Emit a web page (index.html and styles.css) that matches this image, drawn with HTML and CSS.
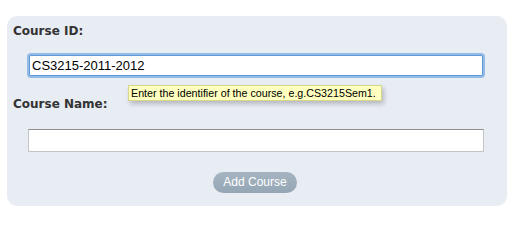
FILE: index.html
```html
<!DOCTYPE html>
<html>
<head>
<meta charset="utf-8">
<link rel="stylesheet" href="styles.css">
</head>
<body>
<div class="page">
  <form class="panel">
    <div class="label">Course ID:</div>
    <div class="field-wrap">
      <input class="field focused" type="text" value="CS3215-2011-2012">
      <div class="tooltip">Enter the identifier of the course, e.g.CS3215Sem1.</div>
    </div>
    <div class="label label-name">Course Name:</div>
    <input class="field plain" type="text" value="">
    <div class="actions">
      <button type="button" class="btn">Add Course</button>
    </div>
  </form>
</div>
</body>
</html>
```
FILE: styles.css
```css
html, body {
  margin: 0;
  padding: 0;
  background: #ffffff;
}
.page {
  padding: 16px 6px 0 7px;
}
.panel {
  width: 500px;
  height: 190px;
  box-sizing: border-box;
  background: #e8ecf3;
  border-radius: 10px;
  padding: 8px 0 0 6px;
  margin: 0;
}
.label {
  font-family: "DejaVu Sans", Verdana, sans-serif;
  font-weight: bold;
  font-size: 12px;
  line-height: 14px;
  color: #333333;
}
.field-wrap {
  position: relative;
  margin-top: 17px;
}
.field {
  display: block;
  box-sizing: border-box;
  font-family: "Liberation Sans", Arial, sans-serif;
  font-size: 13px;
  color: #000;
  background: #ffffff;
  margin: 0;
  outline: none;
}
.focused {
  width: 454px;
  height: 21px;
  margin-left: 16px;
  border: 1px solid #5f9bd8;
  border-radius: 2px;
  box-shadow: 0 0 0 2px rgba(120, 170, 225, 0.75);
  padding: 0 2px 0 2px;
}
.tooltip {
  position: absolute;
  left: 115px;
  top: 30px;
  width: 254px;
  height: 16px;
  box-sizing: border-box;
  background: #ffffbf;
  border: 1px solid #d6d68c;
  box-shadow: 2px 3px 5px rgba(0, 0, 0, 0.22);
  font-family: "Liberation Sans", Arial, sans-serif;
  font-size: 10.7px;
  line-height: 14px;
  color: #000;
  padding: 0 2px;
  white-space: nowrap;
}
.label-name {
  margin-top: 21px;
}
.plain {
  width: 456px;
  height: 23px;
  margin-left: 15px;
  margin-top: 18px;
  border: 1px solid #c4c4c4;
  border-top-color: #8e8e8e;
  padding: 0 3px;
}
.actions {
  margin-top: 20px;
  padding-left: 200px;
}
.btn {
  display: block;
  width: 84px;
  height: 21px;
  border: none;
  border-radius: 11px;
  background: linear-gradient(#a5b4c1, #95a6b4);
  color: #ffffff;
  font-family: "Liberation Sans", Arial, sans-serif;
  font-size: 12px;
  line-height: 21px;
  padding: 0;
  margin: 0;
}
```
